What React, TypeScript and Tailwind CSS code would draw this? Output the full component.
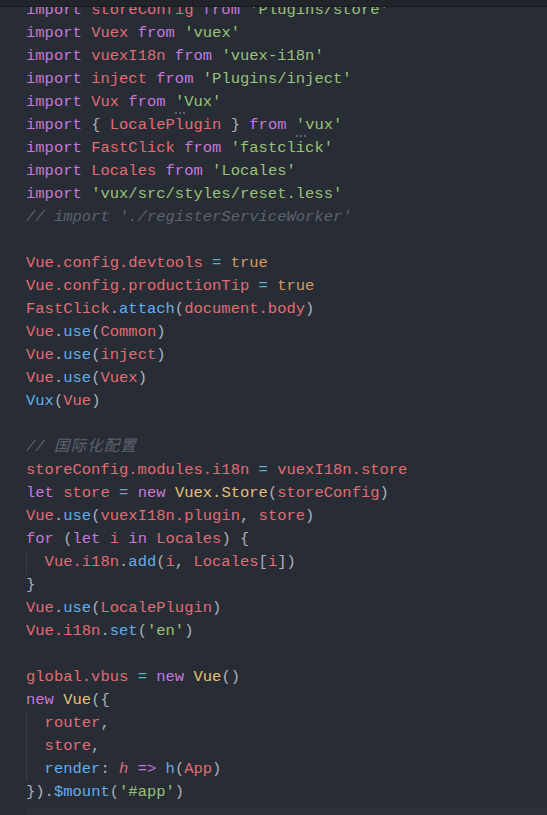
import React from "react";

const K = "text-[#c678dd]";
const R = "text-[#e06c75]";
const S = "text-[#98c379]";
const C = "text-[#5c6370] italic";
const F = "text-[#61afef]";
const O = "text-[#56b6c2]";
const B = "text-[#d19a66]";
const Y = "text-[#e5c07b]";
const P = "text-[#abb2bf]";
const RI = "text-[#e06c75] italic";
const CJ = "text-[#5c6370] italic tracking-[1.1px]";

type Tok = [string, string] | [string, string, "hint"];
type Line = { indent?: boolean; toks: Tok[] };

const lines: (Line | null)[] = [
  { toks: [["import", K], [" ", P], ["storeConfig", R], [" ", P], ["from", K], [" ", P], ["'Plugins/store'", S]] },
  { toks: [["import", K], [" ", P], ["Vuex", R], [" ", P], ["from", K], [" ", P], ["'vuex'", S]] },
  { toks: [["import", K], [" ", P], ["vuexI18n", R], [" ", P], ["from", K], [" ", P], ["'vuex-i18n'", S]] },
  { toks: [["import", K], [" ", P], ["inject", R], [" ", P], ["from", K], [" ", P], ["'Plugins/inject'", S]] },
  { toks: [["import", K], [" ", P], ["Vux", R], [" ", P], ["from", K], [" ", P], ["'Vux'", S, "hint"]] },
  { toks: [["import", K], [" ", P], ["{", P], [" ", P], ["LocalePlugin", R], [" ", P], ["}", P], [" ", P], ["from", K], [" ", P], ["'vux'", S, "hint"]] },
  { toks: [["import", K], [" ", P], ["FastClick", R], [" ", P], ["from", K], [" ", P], ["'fastclick'", S]] },
  { toks: [["import", K], [" ", P], ["Locales", R], [" ", P], ["from", K], [" ", P], ["'Locales'", S]] },
  { toks: [["import", K], [" ", P], ["'vux/src/styles/reset.less'", S]] },
  { toks: [["// import './registerServiceWorker'", C]] },
  null,
  { toks: [["Vue.config.devtools", R], [" ", P], ["=", O], [" ", P], ["true", B]] },
  { toks: [["Vue.config.productionTip", R], [" ", P], ["=", O], [" ", P], ["true", B]] },
  { toks: [["FastClick", R], [".", P], ["attach", F], ["(", P], ["document.body", R], [")", P]] },
  { toks: [["Vue", R], [".", P], ["use", F], ["(", P], ["Common", R], [")", P]] },
  { toks: [["Vue", R], [".", P], ["use", F], ["(", P], ["inject", R], [")", P]] },
  { toks: [["Vue", R], [".", P], ["use", F], ["(", P], ["Vuex", R], [")", P]] },
  { toks: [["Vux", F], ["(", P], ["Vue", R], [")", P]] },
  null,
  { toks: [["// ", C], ["国际化配置", CJ]] },
  { toks: [["storeConfig.modules.i18n", R], [" ", P], ["=", O], [" ", P], ["vuexI18n.store", R]] },
  { toks: [["let", K], [" ", P], ["store", R], [" ", P], ["=", O], [" ", P], ["new", K], [" ", P], ["Vuex.Store", Y], ["(", P], ["storeConfig", R], [")", P]] },
  { toks: [["Vue", R], [".", P], ["use", F], ["(", P], ["vuexI18n.plugin", R], [", ", P], ["store", R], [")", P]] },
  { toks: [["for", K], [" (", P], ["let", K], [" ", P], ["i", R], [" ", P], ["in", K], [" ", P], ["Locales", R], [") {", P]] },
  { indent: true, toks: [["Vue.i18n", R], [".", P], ["add", F], ["(", P], ["i", R], [", ", P], ["Locales", R], ["[", P], ["i", R], ["])", P]] },
  { toks: [["}", P]] },
  { toks: [["Vue", R], [".", P], ["use", F], ["(", P], ["LocalePlugin", R], [")", P]] },
  { toks: [["Vue.i18n", R], [".", P], ["set", F], ["(", P], ["'en'", S], [")", P]] },
  null,
  { toks: [["global.vbus", R], [" ", P], ["=", O], [" ", P], ["new", K], [" ", P], ["Vue", Y], ["()", P]] },
  { toks: [["new", K], [" ", P], ["Vue", Y], ["({", P]] },
  { indent: true, toks: [["router", R], [",", P]] },
  { indent: true, toks: [["store", R], [",", P]] },
  { indent: true, toks: [["render", F], [": ", P], ["h", RI], [" ", P], ["=>", K], [" ", P], ["h", F], ["(", P], ["App", R], [")", P]] },
  { toks: [["})", P], [".", P], ["$mount", F], ["(", P], ["'#app'", S], [")", P]] },
];

function Hint({ text, cls }: { text: string; cls: string }) {
  return (
    <span className={`relative ${cls}`}>
      {text}
      <span className="absolute left-[0px] top-[19px] flex gap-[2px]">
        <span className="w-[2px] h-[2px] bg-[#5c6370]" />
        <span className="w-[2px] h-[2px] bg-[#5c6370]" />
        <span className="w-[2px] h-[2px] bg-[#5c6370]" />
      </span>
    </span>
  );
}

export default function App() {
  return (
    <div
      className="w-full h-[815px] bg-[#282c34] overflow-hidden text-[15.5px] leading-[23px]"
      style={{ fontFamily: '"Liberation Mono", "Noto Sans CJK SC", monospace' }}
    >
      <div className="relative z-10 flex h-[7px] bg-[#21252b] border-b border-[#181a1f]">
        <div className="w-[68px] border-r border-[#181a1f]" />
        <div className="w-[125px] border-r border-[#181a1f]" />
      </div>
      <div className="mt-[-8px] pl-[26px]">
        {lines.map((ln, i) =>
          ln === null ? (
            <div key={i} className="h-[23px]" />
          ) : (
            <div key={i} className="h-[23px] whitespace-pre flex">
              {ln.indent && (
                <span className="inline-block h-[23px] w-[18.6px] border-l border-[#3b4048] shrink-0" />
              )}
              <span>
                {ln.toks.map((t, j) =>
                  t[2] === "hint" ? (
                    <Hint key={j} text={t[0]} cls={t[1]} />
                  ) : (
                    <span key={j} className={t[1]}>
                      {t[0]}
                    </span>
                  )
                )}
              </span>
            </div>
          )
        )}
        <div className="mt-[5px] h-[6px] bg-[#2c313a]" />
      </div>
    </div>
  );
}
